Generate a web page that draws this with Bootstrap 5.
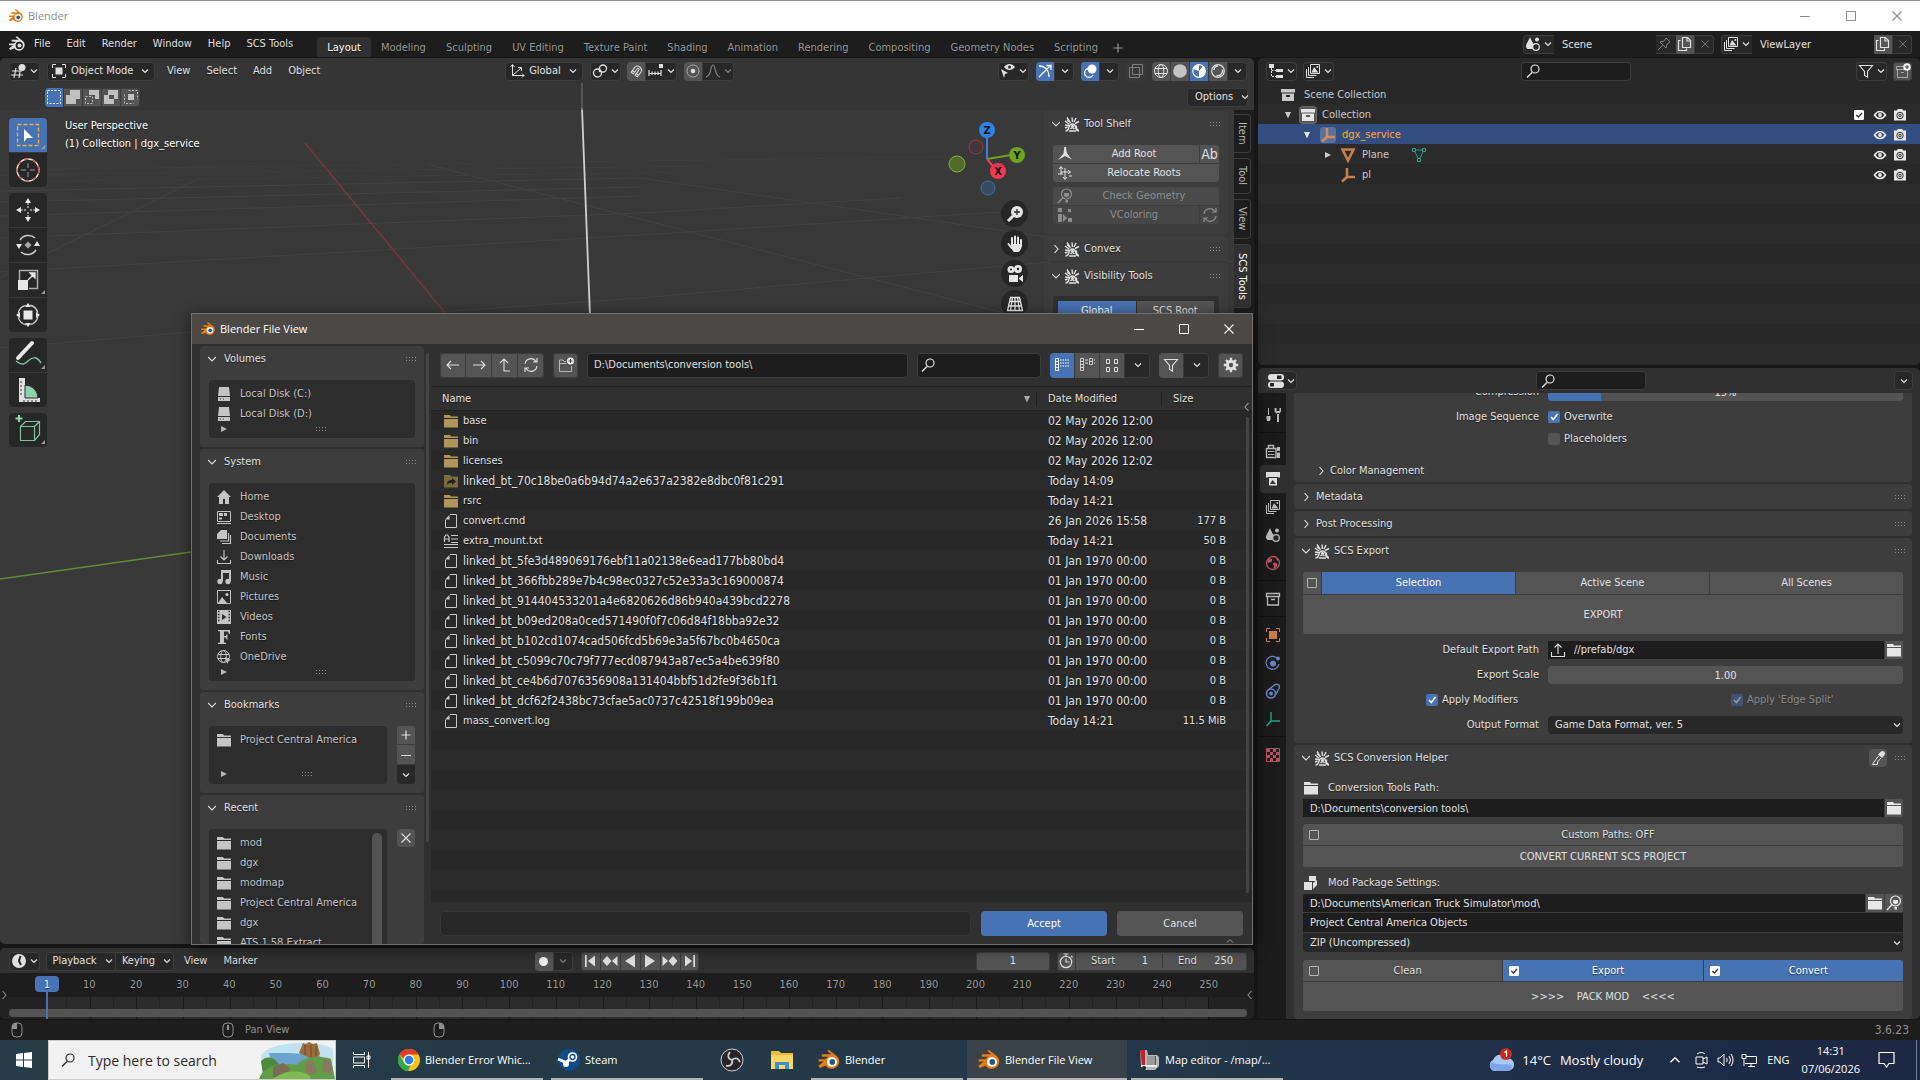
<!DOCTYPE html>
<html lang="en" data-bs-theme="dark">
<head>
<meta charset="utf-8">
<meta name="viewport" content="width=device-width, initial-scale=1">
<title>Blender</title>
<link href="https://cdn.jsdelivr.net/npm/bootstrap@5.3.0/dist/css/bootstrap.min.css" rel="stylesheet">
<style>
:root{--wgt:#545454;--blue:#4772b3;--panel:#3d3d3d;--edge:#3d3d3d;--menu:#282828;--txt:#1d1d1d}
body{height:100vh;overflow:hidden;background:#161616;color:#e0e0e0;font-family:"DejaVu Sans Condensed","DejaVu Sans",sans-serif;font-size:11px;line-height:14px;position:relative}
button,input,select{font:inherit;color:inherit;margin:0;padding:0;border:0;background:none;border-radius:0;outline:0;min-width:0}
button{display:flex;align-items:center;justify-content:center}
a{color:inherit;text-decoration:none}
svg{display:block;flex:none;overflow:visible}
.ic,.ic-s{width:16px;height:16px;fill:currentColor;stroke:none}
.ic-s{width:8px;height:8px}
.grip{width:12px;height:6px;fill:#8a8a8a}
.win-ui{font-family:"Open Sans","Noto Sans",sans-serif}
.shade{text-shadow:0 1px 1px rgba(0,0,0,.5)}
.titlebar{height:31px;background:#fff;color:#8c8c8c;border-top:1px solid #8f8f8f}
.winbtn{width:46px;height:30px}
.topbar{height:26px;background:#1d1d1d}
.menu-link{padding:0 8px}
.ws-tab{height:20px;padding:1px 10px 0;color:#989898;border-radius:4px 4px 0 0;display:flex;align-items:center}
.ws-tab.active{background:#303030;color:#fff}
.wg{height:19px;display:flex;align-items:stretch;border-radius:4px;box-shadow:inset 0 0 0 1px var(--edge);background:var(--menu);overflow:hidden;align-items:center}
.wg>button{height:19px;width:19px;border-right:1px solid #3b3b3b}
.wg>button:last-child{border-right:0}
.lit{background:var(--wgt)}
.on{background:var(--blue)!important;color:#fff}
.dim{color:#7f7f7f}
.ed{width:31px;justify-content:center;gap:3px}
.sel{display:flex;align-items:center}
.sel select{appearance:none;flex:1 1 auto;padding-right:16px;height:19px}
.sel>svg:last-child{margin-left:-14px;margin-right:6px;pointer-events:none}
.area{border-radius:5px;overflow:hidden}
.right-col{width:662px;flex:none}
.view3d{background:#393939}
.vhead{height:52px;background:rgba(48,48,48,.45)}
.tools{width:38px}
.tgroup{border-radius:4px;overflow:hidden;display:flex;flex-direction:column;gap:1px;background:#3a3a3a}
.tgroup button{width:38px;height:34px;background:#272727;position:relative}
.tgroup svg{width:24px;height:24px}
.corner::after{content:"";position:absolute;right:2px;bottom:3px;border:2px solid transparent;border-right-color:#999;border-bottom-color:#999}
.npanel{width:184px}
.npanel .stack button{height:18px}
.pnl{background:var(--panel);border-radius:4px}
.ph{height:26px;display:flex;align-items:center;padding:0 12px 0 8px;gap:4px}
.vtabs{width:20px;background:#1d1d1d}
.vtabs button{writing-mode:vertical-rl;width:17px;border:1px solid #3c3c3c;border-left:0;border-radius:0 4px 4px 0;color:#b8b8b8}
.vtabs .cur{background:#303030;color:#fff}
.stack{display:flex;flex-direction:column;gap:1px;border-radius:3px;overflow:hidden}
.stack button,.cell{background:var(--wgt);height:19px;flex:none}
.nav-dot{width:27px;height:27px;border-radius:50%;background:#262626;color:#e6e6e6}
.nav-dot svg{width:18px;height:18px}
.outl{background:#282828}
.hd{height:26px;display:flex;align-items:center}
.rows{background:repeating-linear-gradient(#282828 0 20px,#2b2b2b 20px 40px)}
.orow{height:20px;padding-top:1px!important;display:flex;align-items:center;color:#c8c8c8}
.orow.picked{background:#334d80}
.orow .lid{color:#e6e6e6}
.halo{background:#5a5a5a;border-radius:3px;box-shadow:0 0 0 1px #6a6a6a}
.ck{appearance:none;width:12px;height:12px;border-radius:2px;background:var(--wgt);flex:none;display:block}
.ck:checked{background:var(--blue) url("data:image/svg+xml,%3Csvg xmlns='http://www.w3.org/2000/svg' viewBox='0 0 12 12'%3E%3Cpath d='M3 6l2.300 2.500L9.500 3' fill='none' stroke='white' stroke-width='1.600'/%3E%3C/svg%3E")}
.ck.line{width:10px;height:10px;border:1px solid #b4b4b4;background-color:transparent;border-radius:1px}
.ck.line:checked{background:#fff url("data:image/svg+xml,%3Csvg xmlns='http://www.w3.org/2000/svg' viewBox='0 0 12 12'%3E%3Cpath d='M2 6l3 3L10.500 3' fill='none' stroke='%23333' stroke-width='2'/%3E%3C/svg%3E");border-color:#fff}
.props{background:#303030}
.ptabs{width:28px;background:#1b1b1b;padding-top:8px}
.ptabs button{width:26px;height:28px;margin-left:2px;color:#b9b9b9;border-radius:4px 0 0 4px}
.ptabs .cur{background:#303030;color:#ddd}
.ptabs hr{margin:3px 0 4px;border-color:#111;opacity:1}
.field{height:18px;background:var(--txt);padding:0 7px;border-radius:0}
.plabel{width:245px;text-align:right;padding-right:9px;flex:none}
.prow{display:flex;align-items:center;height:18px}
.fbtn{width:19px;height:18px;background:var(--wgt);border-left:1px solid #3d3d3d;flex:none;color:#e8e8e8}
.chk{display:flex;align-items:center;gap:4px}
.tog{flex:1 1 0;display:flex;align-items:center;background:var(--wgt);height:21px;padding:0 6px}
.tog span{flex:1;text-align:center}
.tline{background:#1d1d1d}
.tick{flex:1 1 0;text-align:center;color:#9a9a9a}
.tgrid .tick{background:linear-gradient(90deg,transparent 50%,#1a1a1a 50%,#1a1a1a calc(50% + 1px),transparent calc(50% + 1px)),linear-gradient(90deg,#242424 1px,#2c2c2c 1px)}
.tgrid .tick:last-child{background:linear-gradient(90deg,#242424 1px,#2c2c2c 1px,#2c2c2c 50%,#141414 50%,#141414 calc(50% + 1px),#222 calc(50% + 1px))}
.head-frame{left:35px;top:3px;width:24px;height:16px;line-height:17px;border-radius:4px;background:var(--blue);color:#fff;text-align:center;z-index:2}
.head-line{left:46px;top:18px;width:2px;height:28px;background:var(--blue)}
.tbar{left:9px;right:7px;bottom:2px;height:8px;border-radius:4px;background:#545454}
.status{height:20px;background:#1d1d1d;color:#8f8f8f}
.taskbar{height:40px;background:linear-gradient(90deg,#263c46,#22384a 60%,#1f2e47 80%,#1c2744);color:#fff;font-size:11px}
.app{width:160px;height:40px;padding:0 10px;display:flex;align-items:center;gap:4px;justify-content:flex-start;background:linear-gradient(#b0b4b6,#b0b4b6) 50% 100%/152px 2px no-repeat}
.app.active{background:linear-gradient(#b0b4b6,#b0b4b6) 50% 100%/160px 2px no-repeat,#394249}
.app svg{width:24px;height:24px}
.find{width:288px;background:#f2f2f2;color:#2a2a2a;height:40px;font-size:14px;border:1px solid #ccc}
.find input::placeholder{color:#2a2a2a;opacity:1}
.fileview{left:191px;top:313px;width:1062px;height:632px;background:#303030;border:1px solid #6f6f6f;box-shadow:0 3px 14px rgba(0,0,0,.6);z-index:5}
.fv-title{height:30px;background:#4b4845;color:#fff;padding-right:1px}
.fv-title .winbtn{width:45px}
.fv-side{width:224px;margin:2px 0 0 8px}
.fv-side .pnl{margin-bottom:2px}
.lst{background:#2d2d2d;border-radius:3px;color:#c4c4c4;padding:4px 7px 0}
.lst a{display:flex;align-items:center;height:20px;gap:8px}
.lst .foot{height:10px;display:flex;align-items:center;color:#b5b5b5;padding-left:4px;margin-right:-8px}
.big{height:25px}
.big.wg>button{height:25px;width:25px}
.fv-list{background:#282828 repeating-linear-gradient(#282828 0 20px,#2b2b2b 20px 40px) 0 24px}
.fv-list th{height:24px;background:#303030;font-weight:400;border-bottom:1px solid #222;border-top:1px solid #232323;padding:0}
.fv-list td{height:20px;padding:1px 0 0}
.fv-list .hash,.fv-list .when{font-size:12px}
</style>
<script src="https://cdn.jsdelivr.net/npm/bootstrap@5.3.0/dist/js/bootstrap.bundle.min.js"></script>
</head>
<body class="d-flex flex-column">

<svg width="0" height="0" class="position-absolute" aria-hidden="true"><defs>
<symbol id="logo" viewBox="0 0 16 16"><path d="M9.600 4.200 6.800 2l1.100-.9 6 4.900a5 5 0 1 1-8.300 5.700L2 13.300.8 12l3.800-3H1l.1-1.500h4.200l2-1.600L3.200 5.800V4.200z" fill="#e87d0d"/><circle cx="10" cy="9.300" r="3.300" fill="#fff"/><circle cx="10.200" cy="9.300" r="1.900" fill="#265787"/></symbol>
<symbol id="logo-w" viewBox="0 0 16 16"><path d="M9.600 4.200 6.800 2l1.100-.9 6 4.900a5 5 0 1 1-8.300 5.700L2 13.300.8 12l3.800-3H1l.1-1.500h4.200l2-1.600L3.200 5.800V4.200z"/><circle cx="10" cy="9.300" r="3.200" fill="#1d1d1d"/><circle cx="10.200" cy="9.300" r="1.800"/></symbol>
<symbol id="dn" viewBox="0 0 8 8"><path d="M1 2.500 4 5.500 7 2.500" fill="none" stroke="currentColor" stroke-width="1.200"/></symbol>
<symbol id="up" viewBox="0 0 8 8"><path d="M1 5.500 4 2.500 7 5.500" fill="none" stroke="currentColor" stroke-width="1"/></symbol>
<symbol id="rt" viewBox="0 0 8 8"><path d="M2.500 0 6 4 2.500 8" fill="none" stroke="currentColor" stroke-width="1.100"/></symbol>
<symbol id="lf" viewBox="0 0 8 8"><path d="M5.500 0 2 4 5.500 8" fill="none" stroke="currentColor" stroke-width="1.100"/></symbol>
<symbol id="open" viewBox="0 0 8 8"><path d="M0 2 4 6 8 2" fill="none" stroke="currentColor" stroke-width="1.100"/></symbol>
<symbol id="tri-r" viewBox="0 0 8 8"><path d="M1 1v6l6-3z"/></symbol>
<symbol id="tri-d" viewBox="0 0 8 8"><path d="M1 1h6L4 7.500z"/></symbol>
<symbol id="grip" viewBox="0 0 12 6"><path d="M0 1h1v1H0zM3 1h1v1H3zM6 1h1v1H6zM9 1h1v1H9zM0 4h1v1H0zM3 4h1v1H3zM6 4h1v1H6zM9 4h1v1H9z"/></symbol>
<symbol id="min" viewBox="0 0 10 10"><path d="M0 5h10v1H0z"/></symbol>
<symbol id="max" viewBox="0 0 10 10"><path d="M.5.5h9v9h-9z" fill="none" stroke="currentColor"/></symbol>
<symbol id="x" viewBox="0 0 10 10"><path d="M.5.5l9 9m0-9l-9 9" fill="none" stroke="currentColor" stroke-width="1.100"/></symbol>
<symbol id="scs" viewBox="0 0 16 16"><g fill="none" stroke="currentColor" stroke-width="1.400"><path d="M8.500 6 8 1.500M6.500 7 3 1.500M3 4 6 6M1 5l4 3M5 9.500 1 9M10 6l2-4M11 7.500l4-2M12.500 9.500v3l2 2M1 12l2.500-1M1.500 15c2 0 3-1.500 3.500-4 1-4 6-4 6.500 0 .3 2.500 1.500 4 3.500 4"/><path d="M5 15h7M6.500 13c1-1.500 3-1.500 4 0"/></g><circle cx="8.500" cy="10.300" r="1.500"/></symbol>
<symbol id="folder" viewBox="0 0 16 16"><path d="M1 2h6l1 1.500h7V5H1zM1 6h14v8.500H1z"/></symbol>
<symbol id="flink" viewBox="0 0 16 16"><path d="M1 2h6l1 1.500h7v11H1z" fill="#7d6a3c"/><path d="M4 12c0-4 2-5 5-5V5l4 3.500L9 12v-2c-2 0-4 0-5 2z" fill="#222"/></symbol>
<symbol id="file" viewBox="0 0 16 16"><path d="M7 1.500H13.500v13h-11V7" fill="none" stroke="currentColor"/><path d="M2 6.500 6.500 2v4.500z"/></symbol>
<symbol id="ftxt" viewBox="0 0 16 16"><path d="M8 2h7v1H8zM8 5.500h7v1H8zM8 9h7v1H8zM1 11h14v1H1zM1 14h14v1H1z"/><path d="M1.500 9V4L3 2h1.500L6 4v5M1.500 6H6" fill="none" stroke="currentColor" stroke-width="1.200"/></symbol>
<symbol id="find" viewBox="0 0 16 16"><circle cx="10" cy="6" r="4" fill="none" stroke="currentColor" stroke-width="1.200"/><path d="M7 9.500 2 14.500" stroke="currentColor" stroke-width="1.400"/></symbol>
<symbol id="grid3" viewBox="0 0 16 16"><path d="M1 8h10M0 12h12M5 5 3 15M9 8.500 8 15" fill="none" stroke="currentColor" stroke-width="1.200"/><circle cx="11" cy="4.500" r="3.500"/></symbol>
<symbol id="objm" viewBox="0 0 16 16"><path d="M4.500 4.500h7v7h-7z"/><path d="M1.500 5V1.500H5M11 1.500h3.500V5M14.500 11v3.500H11M5 14.500H1.500V11" fill="none" stroke="currentColor"/></symbol>
<symbol id="orient" viewBox="0 0 16 16"><path d="M3.500 2v10.500H15M1.500 4l2-2.500 2 2.500M13 10.500l2 2-2 2M3.500 12.500 12 5M9 4.500h3.500V8" fill="none" stroke="currentColor"/></symbol>
<symbol id="pivot" viewBox="0 0 16 16"><g fill="none" stroke="currentColor" stroke-width="1.300"><circle cx="5.500" cy="10" r="4"/><circle cx="11" cy="5.500" r="3.500"/></g><circle cx="8" cy="8" r="1.300"/></symbol>
<symbol id="magnet" viewBox="0 0 16 16"><g transform="rotate(-8 8 8)"><path d="M3 8.500 7.500 4a4 4 0 0 1 5.500 5.500L8.500 14 6.500 12 11 7.500A1 1 0 0 0 9.500 6L5 10.500zM4.500 7l2 2M10 12.500l-2-2" fill="none" stroke="currentColor"/></g></symbol>
<symbol id="snapi" viewBox="0 0 16 16"><path d="M1 7v6M4 8.500V12M7 8.500V12M10 8.500V12M13 7v6M1 10.500h12" fill="none" stroke="currentColor" stroke-width="1.200"/><path d="M11 1h4v4h-4z"/></symbol>
<symbol id="prop" viewBox="0 0 16 16"><circle cx="8" cy="8" r="6" fill="none" stroke="currentColor" stroke-opacity=".6"/><circle cx="8" cy="8" r="2.300"/></symbol>
<symbol id="curve" viewBox="0 0 16 16"><path d="M1 14C7 13 5 2 8 2s1 11 7 12" fill="none" stroke="currentColor" stroke-width="1.200"/></symbol>
<symbol id="visel" viewBox="0 0 16 16"><path d="M1 6l7 4-3 1-1 4z"/><path d="M4 4c3-4 8-4 11 0-3 4-8 4-11 0z"/><circle cx="9.500" cy="4" r="1.500" fill="#282828"/></symbol>
<symbol id="gizmo" viewBox="0 0 16 16"><path d="M2 3c6 0 10 4 10 11M2 14 13 3M9.500 2.500H14V7" fill="none" stroke="currentColor" stroke-width="1.300"/></symbol>
<symbol id="over" viewBox="0 0 16 16"><circle cx="10" cy="6" r="4.500"/><path d="M6 5.500a4.500 4.500 0 1 0 5 6.500" fill="none" stroke="currentColor" stroke-width="1.300"/></symbol>
<symbol id="xray" viewBox="0 0 16 16"><path d="M4.500 1.500h10v10h-10zM1.500 4.500h10v10h-10z" fill="none" stroke="currentColor"/></symbol>
<symbol id="wire" viewBox="0 0 16 16"><g fill="none" stroke="currentColor"><circle cx="8" cy="8" r="6.500"/><ellipse cx="8" cy="8" rx="2.800" ry="6.500"/><path d="M2 5.500h12M2 10.500h12"/></g></symbol>
<symbol id="solid" viewBox="0 0 16 16"><circle cx="8" cy="8" r="6.800" fill="#c4c4c4"/></symbol>
<symbol id="matp" viewBox="0 0 16 16"><circle cx="8" cy="8" r="6.300" fill="none" stroke="currentColor" stroke-width="1.200"/><path d="M8 8 12 3a6.500 6.500 0 0 1-4 11.300zM8 8 2.500 6A6.500 6.500 0 0 1 8 1.700z"/></symbol>
<symbol id="rend" viewBox="0 0 16 16"><circle cx="8" cy="8" r="6.300" fill="none" stroke="currentColor" stroke-width="1.200"/><path d="M4 7a4 4 0 0 1 4-4M12.500 6.500a5 5 0 0 1-6 6" fill="none" stroke="currentColor" stroke-width="1.500"/></symbol>
<symbol id="scene" viewBox="0 0 16 16"><path d="M5 1c1 3 4 7 4 9a3 3 0 0 1-1 3H2.500A3.500 3.500 0 0 1 1 10C1 8 4 4 5 1z"/><circle cx="11" cy="11" r="3.300" fill="#282828" stroke="currentColor" stroke-width="1.300"/><circle cx="12" cy="3.500" r="2"/></symbol>
<symbol id="layer" viewBox="0 0 16 16"><path d="M1.500 6v8.500H9M3.500 4v8.500h8" fill="none" stroke="currentColor"/><path d="M5.500 1.500h9v9h-9z" fill="none" stroke="currentColor"/><path d="M6.500 9.500 9 4l4.500 5.500z"/><circle cx="12.300" cy="4" r="1"/></symbol>
<symbol id="copy" viewBox="0 0 16 16"><path d="M5.500 1.500h5l3 3v7h-8z" fill="none" stroke="currentColor" stroke-width="1.200"/><path d="M3.500 4.500h-2v10h8v-2M10 1.500V5h3.500" fill="none" stroke="currentColor" stroke-width="1.200"/></symbol>
<symbol id="pin" viewBox="0 0 16 16"><path d="M10 2 14 6l-3 2-1 4-6-6 4-1zM6.500 9.500 2 14" fill="none" stroke="currentColor"/></symbol>
<symbol id="tree" viewBox="0 0 16 16"><path d="M1 1h5v4H1zM8 6h7v3H8zM8 12h7v3H8z"/><path d="M3.500 5v8.500H8M3.500 7.500H8" fill="none" stroke="currentColor" stroke-dasharray="2 1"/></symbol>
<symbol id="funnel" viewBox="0 0 16 16"><path d="M1.500 2.500h13l-5 6V14l-3-1.500v-4z" fill="none" stroke="currentColor" stroke-width="1.100"/></symbol>
<symbol id="newcol" viewBox="0 0 16 16"><path d="M9 3.500H1.500v3h11V9M2.500 6.500v8h10V9M6 9.500h3" fill="none" stroke="currentColor" stroke-opacity=".6"/><circle cx="12" cy="4" r="3.800" fill="#eee"/><path d="M12 2v4M10 4h4" stroke="#444"/></symbol>
<symbol id="coll" viewBox="0 0 16 16"><path d="M1 2h14v3.500H1zM2 6.500h12V14H2zm4 1.500v2h4V8z" fill-rule="evenodd"/></symbol>
<symbol id="coll-o" viewBox="0 0 16 16"><path d="M1.500 2.500h13v3h-13zM2.500 5.500v8.500h11V5.500M6 8.500h4" fill="none" stroke="currentColor" stroke-width="1.300"/></symbol>
<symbol id="empty" viewBox="0 0 16 16"><path d="M7 1v9h8M7 10l-5 4.500" fill="none" stroke="currentColor" stroke-width="2.600"/></symbol>
<symbol id="mesh" viewBox="0 0 16 16"><path d="M2.500 2.500h11L8 13.500z" fill="none" stroke="currentColor" stroke-width="2.600"/></symbol>
<symbol id="meshd" viewBox="0 0 16 16"><path d="M3 3h10L8 13z" fill="none" stroke="currentColor"/><path d="M1.500 1.500h3v3h-3zM11.500 1.500h3v3h-3zM6.500 11.500h3v3h-3z" fill="#2b2b2b" stroke="currentColor"/></symbol>
<symbol id="eye" viewBox="0 0 16 16"><path d="M2.500 8c3-4.700 8-4.700 11 0-3 4.700-8 4.700-11 0z" fill="none" stroke="currentColor" stroke-width="1.600"/><circle cx="8" cy="8" r="1.900"/></symbol>
<symbol id="cam" viewBox="0 0 16 16"><path d="M2 3.500h2.500L6 2h4l1.500 1.500H14v10H2z"/><circle cx="8" cy="8.500" r="3.200" fill="none" stroke="#2b2b2b"/><circle cx="8" cy="8.500" r="1.200" fill="none" stroke="#2b2b2b"/></symbol>
<symbol id="props" viewBox="0 0 16 16"><rect x="0" y="1" width="16" height="6.500" rx="3"/><rect x="0" y="8.500" width="16" height="6.500" rx="3"/><path d="M9 2.500h4.500v3.500H9zM2 10h4v3.500H2z" fill="#282828"/></symbol>
<symbol id="tool" viewBox="0 0 16 16"><path d="M3 1h1v7H3zM1.500 9h4v3c0 3-4 3-4 0zM12 6h2v9h-2zM9.500 1v3.500L12 7h2l2-2.500V1h-1.500v3h-3V1z"/></symbol>
<symbol id="rtab" viewBox="0 0 16 16"><path d="M1.500 5.500h9.500v9H1.500zM3.500 5V2.500h5V5" fill="none" stroke="currentColor" stroke-width="1.400"/><path d="M12 4h3v4h-3zM12 9.500h3v5.500h-3z"/><path d="M3 8.500h6.500M3 11.500h6.500" stroke="currentColor"/></symbol>
<symbol id="otab" viewBox="0 0 16 16"><path d="M1 1h14v5.500h-2V6H3v.5H1zM4 7h8v7.500H4z"/><path d="M5 13l2.500-4L11 13z" fill="#333"/></symbol>
<symbol id="world" viewBox="0 0 16 16"><circle cx="8" cy="8" r="6.500" fill="none" stroke="currentColor" stroke-width="1.300"/><path d="M3 4c3-2 5 0 4 2S3 8 2 7zM8 8c3-1 5 0 4 3s-4 3-3 1-2-2-1-4zM11 2l3 3-2 1z"/></symbol>
<symbol id="objt" viewBox="0 0 16 16"><path d="M4 4h8v8H4z"/><path d="M1.500 5V1.500H5M11 1.500h3.500V5M14.500 11v3.500H11M5 14.500H1.500V11" fill="none" stroke="currentColor"/></symbol>
<symbol id="phys" viewBox="0 0 16 16"><path d="M12 3A6.500 6.500 0 1 0 14 9" fill="none" stroke="currentColor" stroke-width="1.200"/><circle cx="8" cy="8.500" r="3"/><circle cx="13" cy="3.500" r="2"/></symbol>
<symbol id="cons" viewBox="0 0 16 16"><path d="M2 8 10 1.500c4-1 5 1 4 4L10.500 12" fill="none" stroke="currentColor" stroke-width="1.400"/><circle cx="6" cy="10.500" r="4.500" fill="none" stroke="currentColor" stroke-width="1.500"/><circle cx="6" cy="10.500" r="2"/></symbol>
<symbol id="axis" viewBox="0 0 16 16"><path d="M6 1v9h9M6 10l-4.500 5" fill="none" stroke="currentColor" stroke-width="1.400"/></symbol>
<symbol id="chk" viewBox="0 0 16 16"><path d="M1.500 1.500h13v13h-13z" fill="none" stroke="currentColor"/><path d="M2 2h3v3H2zM8 2h3v3H8zM5 5h3v3H5zM11 5h3v3h-3zM2 8h3v3H2zM8 8h3v3H8zM5 11h3v3H5zM11 11h3v3h-3z"/></symbol>
<symbol id="upl" viewBox="0 0 16 16"><path d="M8 12V2M4.500 5.500 8 2l3.500 3.500M1.500 10v4.500h13V10" fill="none" stroke="currentColor" stroke-width="1.100"/></symbol>
<symbol id="dnl" viewBox="0 0 16 16"><path d="M8 1v10M4.500 7.500 8 11l3.500-3.500M1.500 11v3.500h13V11" fill="none" stroke="currentColor" stroke-width="1.100"/></symbol>
<symbol id="drop" viewBox="0 0 16 16"><path d="M11 1.500a2.500 2.500 0 0 1 3.500 3.500L12 8 8 4.500z"/><path d="M8.500 6 4 12l-1.500 2.500h5V12L11 8" fill="none" stroke="currentColor"/></symbol>
<symbol id="pack" viewBox="0 0 16 16"><path d="M6 1h7v5H6zM1 7h8v8H1zM10 8l4-3v5l-4 4z"/></symbol>
<symbol id="mag" viewBox="0 0 16 16"><circle cx="9.500" cy="6" r="5" fill="none" stroke="currentColor" stroke-width="1.200"/><path d="M6 9.500 1 15" stroke="currentColor" stroke-width="1.500"/><path d="M7 5h5v3L9.500 9.500 7 8zM8.500 12h2.500v2.500H8.500z"/></symbol>
<symbol id="root" viewBox="0 0 16 16"><path d="M7.300 1h1.600l1 6 5 6.500L8 10l-7 4 5.500-6.500z"/></symbol>
<symbol id="reloc" viewBox="0 0 16 16"><path d="M4 9V2M2 4l2-2.500L6 4M4 7h9M11 5l2.500 2L11 9M8 3v11M6 12l2 2.500 2-2.500M1 9h5M12 11h3" fill="none" stroke="currentColor"/></symbol>
<symbol id="vcol" viewBox="0 0 16 16"><path d="M1 1h4v4H1zM1 7h4v8H1zM6 7l4 4-4 4zM11 2h3v3h-3zM11 11h4v4h-4z"/></symbol>
<symbol id="refr" viewBox="0 0 16 16"><path d="M2 7a6 6 0 0 1 11-2.500M14 1v4h-4M14 9a6 6 0 0 1-11 2.500M2 15v-4h4" fill="none" stroke="currentColor" stroke-width="1.200"/></symbol>
<symbol id="disk" viewBox="0 0 16 16"><path d="M3 1h10l1 9H2zM2 11h12v4H2z"/><path d="M4 12.500h1v1H4zM7 12.500h1v1H7z" fill="#333"/></symbol>
<symbol id="home" viewBox="0 0 16 16"><path d="M8 1 1 8h2v7h4v-5h2v5h4V8h2z"/></symbol>
<symbol id="desk" viewBox="0 0 16 16"><path d="M1.500 2.500h13v10h-13zM1 14.500h14" fill="none" stroke="currentColor"/><path d="M3 4h4v3H3zM8 4h3v3H8zM3 8.500h3v2H3z"/></symbol>
<symbol id="docs" viewBox="0 0 16 16"><path d="M5 1h6v9H1V5z"/><path d="M12.500 4v8H4M14.500 6v8.500H6" fill="none" stroke="currentColor" stroke-width="1.200"/></symbol>
<symbol id="music" viewBox="0 0 16 16"><path d="M5 1h10v11h-2V4H7v8H5z"/><circle cx="4" cy="12.500" r="2.700"/><circle cx="12" cy="12.500" r="2.700"/></symbol>
<symbol id="pict" viewBox="0 0 16 16"><path d="M1.500 1.500h13v13h-13z" fill="none" stroke="currentColor"/><path d="M2 14l4-6 5 6z"/><circle cx="11" cy="5.500" r="1.600"/></symbol>
<symbol id="video" viewBox="0 0 16 16"><path d="M1 1h14v14H1z"/><path d="M2 2.500h1.500M2 5.500h1.500M2 8.500h1.500M2 11.500h1.500M12.500 2.500H14M12.500 5.500H14M12.500 8.500H14M12.500 11.500H14" stroke="#2d2d2d" stroke-width="1.500"/><path d="M6 5v6l4.500-3z" fill="#2d2d2d"/></symbol>
<symbol id="fontf" viewBox="0 0 16 16"><path d="M2 1h12v4h-1l-1-2.500H8V7h2l.5-1.500h1v5h-1L10 8.500H8v5l2 .5v1H2v-1l2-.5v-11L2 2z"/></symbol>
<symbol id="globe" viewBox="0 0 16 16"><g fill="none" stroke="currentColor"><circle cx="7.500" cy="7.500" r="6"/><ellipse cx="7.500" cy="7.500" rx="2.800" ry="6"/><path d="M2 5.500h11M2 9.500h11"/></g><path d="M9 8l6 3-2.500 1-1 3z"/></symbol>
<symbol id="a-l" viewBox="0 0 16 16"><path d="M14 8H2M6 4 2 8l4 4" fill="none" stroke="currentColor" stroke-width="1.100"/></symbol>
<symbol id="a-r" viewBox="0 0 16 16"><path d="M2 8h12M10 4l4 4-4 4" fill="none" stroke="currentColor" stroke-width="1.100"/></symbol>
<symbol id="a-u" viewBox="0 0 16 16"><path d="M7 2v12h6M3 6l4-4 4 4" fill="none" stroke="currentColor" stroke-width="1.100"/></symbol>
<symbol id="newf" viewBox="0 0 16 16"><path d="M8 4.500H6L5 3H1.500v11.500h12V9M1.500 6.500h7" fill="none" stroke="currentColor" stroke-opacity=".7"/><circle cx="12.500" cy="4" r="3.500" fill="#eee"/><path d="M12.500 2v4M10.500 4h4" stroke="#444"/></symbol>
<symbol id="v1" viewBox="0 0 16 16"><path d="M1.500 1.500h3v3h-3zM1.500 4.500h3v3h-3zM1.500 7.500h3v3h-3zM1.500 10.500h3v3h-3z" fill="none" stroke="currentColor"/><path d="M6 3h10M6 6h10M6 9h10" stroke="currentColor" stroke-dasharray="1.500 1"/></symbol>
<symbol id="v2" viewBox="0 0 16 16"><path d="M1.500 1.500h3v3h-3zM1.500 4.500h3v3h-3zM1.500 7.500h3v3h-3zM1.500 10.500h3v3h-3zM10.500 1.500h3v3h-3zM10.500 4.500h3v3h-3z" fill="none" stroke="currentColor" stroke-opacity=".8"/><path d="M6 3h3M6 6h3M15 3h1M15 6h1" stroke="currentColor"/></symbol>
<symbol id="v3" viewBox="0 0 16 16"><path d="M2.500 2.500h3v4h-3zM10.500 2.500h3v4h-3zM2.500 10.500h3v4h-3zM10.500 10.500h3v4h-3z" fill="none" stroke="currentColor"/></symbol>
<symbol id="gear" viewBox="0 0 16 16"><circle cx="8" cy="8" r="3.700" fill="none" stroke="currentColor" stroke-width="3.200"/><path d="M8 .8v14.400M.8 8h14.400M3 3l10 10M13 3 3 13" stroke="currentColor" stroke-width="2.400"/><circle cx="8" cy="8" r="2.200" fill="#545454"/></symbol>
<symbol id="plus" viewBox="0 0 10 10"><path d="M5 .5v9M.5 5h9" stroke="currentColor" stroke-width="1.200"/></symbol>
<symbol id="clock" viewBox="0 0 16 16"><circle cx="8" cy="8" r="7"/><path d="M9.500 3 8 8l2 4" fill="none" stroke="#282828" stroke-width="2"/></symbol>
<symbol id="watch" viewBox="0 0 16 16"><circle cx="8" cy="9" r="5.700" fill="none" stroke="currentColor" stroke-width="1.200"/><path d="M5.500 1h5M8 1v2M8 5.500V9h3.500M13 3l1.500 1.500" fill="none" stroke="currentColor" stroke-width="1.200"/></symbol>
<symbol id="p1" viewBox="0 0 16 16"><path d="M3 2h1.700v12H3zM13 2.500v11L6 8z"/></symbol>
<symbol id="p2" viewBox="0 0 16 16"><path d="M5 3l4.500 5L5 13 .5 8zM15.500 3v10L10 8z"/></symbol>
<symbol id="p3" viewBox="0 0 16 16"><path d="M13 1.500v13L3 8z"/></symbol>
<symbol id="mouse-l" viewBox="0 0 12 16"><rect x="1" y="1" width="10" height="14" rx="4" fill="none" stroke="currentColor"/><path d="M1 7V4l3-3h2v6z"/></symbol>
<symbol id="mouse-m" viewBox="0 0 12 16"><rect x="1" y="1" width="10" height="14" rx="4" fill="none" stroke="currentColor"/><path d="M5 3h2v5H5z"/></symbol>
<symbol id="mouse-r" viewBox="0 0 12 16"><rect x="1" y="1" width="10" height="14" rx="4" fill="none" stroke="currentColor"/><path d="M11 7V4L8 1H6v6z"/></symbol>
</defs></svg>

<header class="titlebar win-ui d-flex align-items-center flex-shrink-0">
  <svg class="ic ms-2 me-1"><use href="#logo"/></svg><span>Blender</span>
  <button class="winbtn ms-auto" aria-label="Minimize"><svg width="10" height="10" fill="#8c8c8c"><use href="#min"/></svg></button>
  <button class="winbtn" aria-label="Maximize"><svg width="10" height="10"><use href="#max"/></svg></button>
  <button class="winbtn" aria-label="Close"><svg width="10" height="10"><use href="#x"/></svg></button>
</header>

<nav class="topbar shade d-flex flex-shrink-0">
  <div class="d-flex align-items-center ps-2">
    <svg class="ic" style="width:18px;height:18px"><use href="#logo-w"/></svg>
    <a class="menu-link" href="#">File</a><a class="menu-link" href="#">Edit</a><a class="menu-link" href="#">Render</a><a class="menu-link" href="#">Window</a><a class="menu-link" href="#">Help</a><a class="menu-link" href="#">SCS Tools</a>
  </div>
  <div class="d-flex align-items-end ms-3">
    <a class="ws-tab active" href="#">Layout</a><a class="ws-tab" href="#">Modeling</a><a class="ws-tab" href="#">Sculpting</a><a class="ws-tab" href="#">UV Editing</a><a class="ws-tab" href="#">Texture Paint</a><a class="ws-tab" href="#">Shading</a><a class="ws-tab" href="#">Animation</a><a class="ws-tab" href="#">Rendering</a><a class="ws-tab" href="#">Compositing</a><a class="ws-tab" href="#">Geometry Nodes</a><a class="ws-tab" href="#">Scripting</a>
    <button class="ws-tab" style="padding:1px 5px 0" aria-label="Add workspace"><svg width="10" height="10"><use href="#plus"/></svg></button>
  </div>
  <div class="d-flex align-items-center ms-auto pe-2" style="gap:7px">
    <div class="wg" style="width:191px"><div class="ed d-flex align-items-center"><svg class="ic"><use href="#scene"/></svg><svg class="ic-s"><use href="#dn"/></svg></div>
      <input class="flex-fill h-100 ps-2" style="background:#1d1d1d;width:90px" value="Scene" aria-label="Scene"><svg class="ic dim me-1"><use href="#pin"/></svg>
      <button class="lit" aria-label="New scene"><svg class="ic"><use href="#copy"/></svg></button><button class="dim" aria-label="Remove scene"><svg width="8" height="8"><use href="#x"/></svg></button></div>
    <div class="wg" style="width:191px"><div class="ed d-flex align-items-center"><svg class="ic"><use href="#layer"/></svg><svg class="ic-s"><use href="#dn"/></svg></div>
      <input class="flex-fill h-100 ps-2" style="background:#1d1d1d;width:90px" value="ViewLayer" aria-label="View layer">
      <button class="lit" aria-label="New layer"><svg class="ic"><use href="#copy"/></svg></button><button class="dim" aria-label="Remove layer"><svg width="8" height="8"><use href="#x"/></svg></button></div>
  </div>
</nav>

<main class="d-flex flex-fill overflow-hidden" style="gap:4px;padding:1px 0 1px">
  <div class="d-flex flex-column flex-fill overflow-hidden" style="gap:4px">
    <section class="area view3d flex-fill position-relative d-flex flex-column">
      <svg class="position-absolute top-0 start-0" width="1254" height="886" viewBox="0 58 1254 886">
        <g stroke="#444" stroke-width="1" fill="none">
          <path d="M0 348 191 332M0 272 640 235 1000 212M0 238 640 213 900 198M0 216 640 196M0 202 640 187M0 191 640 178M50 252 200 178M0 278 50 252M430 165 640 219 1000 312M640 178 1040 236 1235 262M640 298 1050 262M440 312 640 298"/>
          <path d="M0 182 700 172M0 175 700 166M0 170 1000 156" stroke="#3e3e3e"/>
        </g>
        <path d="M305 143 446 314" stroke="#7b3540" stroke-width="1.300"/>
        <path d="M582 83v25" stroke="#888" stroke-width="1.500"/><path d="M582 108 590 316" stroke="#d0d0d0" stroke-width="1.800"/>
        <path d="M0 579 191 552" stroke="#668a33" stroke-width="1.500"/>
      </svg>
      <div class="vhead position-relative shade">
        <div class="d-flex align-items-center" style="height:26px;padding:0 7px 0 9px">
          <div class="wg ed"><svg class="ic"><use href="#grid3"/></svg><svg class="ic-s"><use href="#dn"/></svg></div>
          <div class="wg sel" style="width:108px;margin-left:7px"><svg class="ic ms-1 me-1"><use href="#objm"/></svg><select aria-label="Mode"><option>Object Mode</option></select><svg class="ic-s"><use href="#dn"/></svg></div>
          <div class="d-flex ms-2 gap-3"><a href="#" class="ms-1">View</a><a href="#">Select</a><a href="#">Add</a><a href="#">Object</a></div>
          <div style="flex:7"></div>
          <div class="wg sel" style="width:78px"><svg class="ic ms-1 me-1"><use href="#orient"/></svg><select aria-label="Orientation"><option>Global</option></select><svg class="ic-s"><use href="#dn"/></svg></div>
          <div class="wg ed" style="margin-left:7px"><svg class="ic"><use href="#pivot"/></svg><svg class="ic-s"><use href="#dn"/></svg></div>
          <div class="wg" style="margin-left:6px"><button class="lit" aria-label="Snap"><svg class="ic"><use href="#magnet"/></svg></button><div class="ed d-flex"><svg class="ic"><use href="#snapi"/></svg><svg class="ic-s mt-1"><use href="#dn"/></svg></div></div>
          <div class="wg" style="margin-left:7px"><button class="lit" aria-label="Proportional"><svg class="ic"><use href="#prop"/></svg></button><div class="ed d-flex dim"><svg class="ic"><use href="#curve"/></svg><svg class="ic-s mt-1"><use href="#dn"/></svg></div></div>
          <div style="flex:10"></div>
          <div class="d-flex" style="gap:7px">
            <div class="wg ed"><svg class="ic"><use href="#visel"/></svg><svg class="ic-s"><use href="#dn"/></svg></div>
            <div class="wg"><button class="on" aria-label="Gizmos"><svg class="ic"><use href="#gizmo"/></svg></button><button aria-label="Gizmo options"><svg class="ic-s"><use href="#dn"/></svg></button></div>
            <div class="wg"><button class="on" aria-label="Overlays"><svg class="ic"><use href="#over"/></svg></button><button aria-label="Overlay options"><svg class="ic-s"><use href="#dn"/></svg></button></div>
            <div class="wg"><button class="dim" style="background:#383838" aria-label="X-ray"><svg class="ic"><use href="#xray"/></svg></button></div>
            <div class="wg"><button class="lit" aria-label="Wireframe"><svg class="ic"><use href="#wire"/></svg></button><button class="lit" aria-label="Solid"><svg class="ic"><use href="#solid"/></svg></button><button class="on" aria-label="Material"><svg class="ic"><use href="#matp"/></svg></button><button class="lit" aria-label="Rendered"><svg class="ic"><use href="#rend"/></svg></button><button aria-label="Shading options"><svg class="ic-s"><use href="#dn"/></svg></button></div>
          </div>
        </div>
        <div class="d-flex align-items-center justify-content-between" style="height:26px;padding:0 6px 0 45px">
          <div class="wg" style="background:#545454">
            <button class="on" aria-label="Set"><svg class="ic"><path d="M1.500 1.500h13v13h-13z" fill="none" stroke="#fff" stroke-dasharray="2 1.500"/></svg></button>
            <button aria-label="Extend"><svg class="ic" style="color:#c0c0c0"><path d="M5 1h10v9h-4v5H1V6h4z"/></svg></button>
            <button aria-label="Subtract"><svg class="ic" style="color:#c0c0c0"><path d="M5 1h10v9h-4V6H5z"/><path d="M1.500 7.500h7v7h-7z" fill="none" stroke="#bbb" stroke-dasharray="2 1.500"/></svg></button>
            <button aria-label="Invert"><svg class="ic" style="color:#c0c0c0"><path fill-rule="evenodd" d="M5 1h10v9h-4v5H1V6h4zM6 6v4h5V6z"/></svg></button>
            <button aria-label="Intersect"><svg class="ic" style="color:#c0c0c0"><path d="M5 5h6v6H5z"/><path d="M5.500 1.500h9v9M1.500 5.500v9h9" fill="none" stroke="#bbb" stroke-dasharray="2 1.500"/></svg></button>
          </div>
          <button class="wg px-2 gap-2 justify-content-between" style="width:61px">Options <svg class="ic-s" style="margin-right:-4px"><use href="#dn"/></svg></button>
        </div>
      </div>

      <div class="d-flex flex-fill position-relative overflow-hidden">
        <div class="tools d-flex flex-column" style="margin:8px 0 0 9px;gap:6px">
          <div class="tgroup">
            <button class="on corner" aria-label="Select box"><svg viewBox="0 0 24 24"><path d="M1.500 1.500h21v21h-21z" fill="none" stroke="#e8b04a" stroke-width="1.300" stroke-dasharray="4 2"/><path d="M8 6v13l3-4 6 0z" fill="#fff"/></svg></button>
            <button aria-label="Cursor"><svg viewBox="0 0 24 24"><circle cx="12" cy="12" r="11" fill="none" stroke="#e8e8e8" stroke-width="1.300"/><circle cx="12" cy="12" r="11" fill="none" stroke="#c94f55" stroke-width="1.500" stroke-dasharray="4 4"/><path d="M12 5v5M12 14v5M5 12h5M14 12h5" stroke="#999"/></svg></button>
          </div>
          <div class="tgroup">
            <button aria-label="Move"><svg viewBox="0 0 24 24" fill="#e8e8e8"><path d="M12 0l3 5H9zM12 24l3-5H9zM0 12l5-3v6zM24 12l-5-3v6z"/><path d="M12 5v5M12 14v5M5 12h5M14 12h5" stroke="#e8e8e8" stroke-dasharray="2 1"/></svg></button>
            <button aria-label="Rotate"><svg viewBox="0 0 24 24" fill="#e8e8e8"><path d="M4 7a10 10 0 0 1 15-2M20 17a10 10 0 0 1-15 2" fill="none" stroke="#ccc" stroke-width="1.500"/><path d="M12 8.500 15.500 12 12 15.500 8.500 12z" fill="#aaa"/><path d="M0 11h6l-3 5zM18 13h6l-3-5z"/></svg></button>
            <button class="corner" aria-label="Scale"><svg viewBox="0 0 24 24" fill="#e8e8e8"><path d="M3.500 12V2.500h18v18H13" fill="none" stroke="#aaa" stroke-width="1.500"/><path d="M2 12h10v10H2z"/><path d="M12 12l5-5M14 5h5v5z" stroke="#e8e8e8" stroke-width="1.300"/></svg></button>
            <button aria-label="Transform"><svg viewBox="0 0 24 24" fill="#e8e8e8"><circle cx="12" cy="12" r="10" fill="none" stroke="#ccc" stroke-width="1.300" stroke-dasharray="11 4.700" stroke-dashoffset="-2"/><path d="M7.500 7.500h9v9h-9zM12 0l3 4H9zM12 24l3-4H9zM0 12l4-3v6zM24 12l-4-3v6z"/></svg></button>
          </div>
          <div class="tgroup">
            <button class="corner" aria-label="Annotate"><svg viewBox="0 0 24 24"><path d="M2 15 16 0" stroke="#e8e8e8" stroke-width="4" stroke-linecap="round"/><path d="M0 18c6 5 9 3 12 0s8-6 13 2" fill="none" stroke="#7fc0a0" stroke-width="1.500"/></svg></button>
            <button aria-label="Measure"><svg viewBox="0 0 24 24"><path d="M4 0h5v20h15v4H3V0z" fill="#e0e0e0"/><path d="M9 20V7a13 13 0 0 1 13 13z" fill="#8fd3ae" stroke="#2d2d2d"/><path d="M4 4h2M4 8h2M4 12h2M4 16h2M8 24v-2M12 24v-2M16 24v-2M20 24v-2" stroke="#333"/></svg></button>
          </div>
          <div class="tgroup"><button class="corner" aria-label="Add cube"><svg viewBox="0 0 24 24"><path d="M4.500 8.500h14v14h-14zM4.500 8.500l5-5h14v13l-5 6M18.500 8.500l5-5" fill="none" stroke="#7fc0a0" stroke-width="1.200"/><path d="M3-3v7M-.5.5h7" stroke="#8fd3ae" stroke-width="2"/></svg></button></div>
        </div>
        <div class="text-white shade" style="margin:7px 0 0 18px;line-height:18px">User Perspective<br>(1) Collection | dgx_service</div>
        <div class="ms-auto d-flex">
          <div class="d-flex flex-column align-items-end" style="margin-right:16px;gap:3px">
            <svg width="80" height="90" viewBox="946 110 80 90" font-size="11" font-weight="700" text-anchor="middle">
              <path d="M985 159v-24" stroke="#2f83e3" stroke-width="2"/><path d="M985 159l30-5" stroke="#6ca31f" stroke-width="2"/><path d="M985 159l10 12" stroke="#f63652" stroke-width="2"/>
              <circle cx="974" cy="147" r="7" fill="#40363a" stroke="#953b48"/><circle cx="955" cy="164" r="8" fill="#526b2b" stroke="#7eb02a"/><circle cx="986" cy="188" r="7" fill="#394a60" stroke="#3473b8"/>
              <circle cx="985" cy="130" r="8" fill="#2f83e3"/><circle cx="1015" cy="155" r="8" fill="#6ca31f"/><circle cx="996" cy="171" r="8" fill="#f63652"/>
              <g fill="#111"><text x="985" y="134">Z</text><text x="1015" y="159">Y</text><text x="996" y="175">X</text></g>
            </svg>
            <button class="nav-dot" style="margin-top:-3px" aria-label="Zoom"><svg viewBox="0 0 18 18"><circle cx="11" cy="7" r="6" fill="currentColor"/><path d="M7 11 2 16" stroke="currentColor" stroke-width="3"/><path d="M11 4v6M8 7h6" stroke="#262626" stroke-width="1.300"/></svg></button>
            <button class="nav-dot" aria-label="Pan"><svg viewBox="0 0 18 18"><path d="M6 10V3M9 9V1.500M12 9.500V2.500M15 11V5M2.500 9l3 4" stroke="currentColor" stroke-width="2" stroke-linecap="round"/><path d="M5 9h11c0 4-2 8-4 8H8c-1 0-3-4-3-8z" fill="currentColor"/></svg></button>
            <button class="nav-dot" aria-label="Camera"><svg viewBox="0 0 18 18" fill="currentColor"><circle cx="5" cy="4.500" r="3.500"/><circle cx="12" cy="4" r="4"/><path d="M3 10h9v7H3zM13 13l4-3v7l-4-3z"/><circle cx="5" cy="4.500" r="1" fill="#262626"/><circle cx="12" cy="4" r="1.200" fill="#262626"/></svg></button>
            <button class="nav-dot" aria-label="Perspective"><svg viewBox="0 0 18 18"><path d="M4.500 2.500h9l3 13h-15zM3.500 6.500h11M2.500 11h13M9 2.500v13M6.500 2.500l-2 13M11.500 2.500l2 13" fill="none" stroke="currentColor" stroke-width="1.300"/></svg></button>
          </div>
          <div class="npanel d-flex flex-column shade" style="gap:2px;padding-top:1px;margin-right:6px">
            <div class="pnl" style="padding-bottom:10px"><div class="ph"><svg class="ic-s"><use href="#open"/></svg><svg class="ic"><use href="#scs"/></svg>Tool Shelf<svg class="grip ms-auto" style="margin-right:-6px"><use href="#grip"/></svg></div>
              <div class="d-flex flex-column" style="padding:8px 9px 0;gap:5px">
                <div class="stack"><div class="d-flex" style="gap:1px"><button class="flex-fill px-1"><svg class="ic"><use href="#root"/></svg><span class="flex-fill">Add Root</span></button><button style="width:19px;font-size:14px" aria-label="Rename">Ab</button></div><button class="px-1"><svg class="ic"><use href="#reloc"/></svg><span class="flex-fill">Relocate Roots</span></button></div>
                <div class="stack" style="color:#8d8d8d"><button class="px-1" style="background:#4a4a4a"><svg class="ic"><use href="#mag"/></svg><span class="flex-fill">Check Geometry</span></button><div class="d-flex" style="gap:1px"><button class="flex-fill px-1" style="background:#464646"><svg class="ic"><use href="#vcol"/></svg><span class="flex-fill">VColoring</span></button><button style="width:19px;background:#464646" aria-label="Refresh"><svg class="ic"><use href="#refr"/></svg></button></div></div>
              </div></div>
            <div class="pnl"><div class="ph" style="height:25px"><svg class="ic-s"><use href="#rt"/></svg><svg class="ic"><use href="#scs"/></svg>Convex<svg class="grip ms-auto" style="margin-right:-6px"><use href="#grip"/></svg></div></div>
            <div class="pnl flex-fill"><div class="ph"><svg class="ic-s"><use href="#open"/></svg><svg class="ic"><use href="#scs"/></svg>Visibility Tools<svg class="grip ms-auto" style="margin-right:-6px"><use href="#grip"/></svg></div>
              <div style="margin:7px 9px;background:#303030;padding:5px;border-radius:3px"><div class="d-flex" style="gap:1px"><button class="cell on" style="flex:1">Global</button><button class="cell" style="flex:1">SCS Root</button></div></div></div>
          </div>
          <div class="vtabs d-flex flex-column" style="gap:5px;padding-top:4px"><button style="height:39px">Item</button><button style="height:36px">Tool</button><button style="height:40px">View</button><button class="cur" style="height:64px">SCS Tools</button></div>
        </div>
      </div>
    </section>

    <section class="area tline flex-shrink-0 shade" style="height:71px">
      <div class="hd" style="height:25px;background:#303030;padding:1px 7px 0 9px">
        <div class="wg ed"><svg class="ic"><use href="#clock"/></svg><svg class="ic-s"><use href="#dn"/></svg></div>
        <div class="wg" style="margin-left:6px"><button class="px-2 gap-2" style="width:70px">Playback<svg class="ic-s" style="margin-right:-4px"><use href="#dn"/></svg></button><button class="gap-2" style="width:58px">Keying<svg class="ic-s" style="margin-right:-3px"><use href="#dn"/></svg></button></div>
        <a href="#" style="margin-left:10px">View</a><a href="#" class="ms-3">Marker</a>
        <div style="flex:1"></div>
        <div class="wg"><button class="lit" aria-label="Auto keying"><svg width="9" height="9" fill="#eee"><circle cx="4.500" cy="4.500" r="4.500"/></svg></button><button class="dim" aria-label="Keying options"><svg class="ic-s"><use href="#dn"/></svg></button></div>
        <div class="wg lit" style="margin-left:8px"><button style="width:20px" aria-label="First"><svg class="ic"><use href="#p1"/></svg></button><button style="width:20px" aria-label="Previous key"><svg class="ic"><use href="#p2"/></svg></button><button style="width:20px" aria-label="Reverse"><svg class="ic"><use href="#p3"/></svg></button><button style="width:20px" aria-label="Play"><svg class="ic" transform="scale(-1 1)"><use href="#p3"/></svg></button><button style="width:20px" aria-label="Next key"><svg class="ic" transform="scale(-1 1)"><use href="#p2"/></svg></button><button style="width:18px" aria-label="Last"><svg class="ic" transform="scale(-1 1)"><use href="#p1"/></svg></button></div>
        <div style="flex:1"></div>
        <div class="wg lit" style="width:74px"><input class="w-100 text-center" value="1" aria-label="Current frame"></div>
        <div class="wg lit" style="margin-left:7px;width:190px"><button aria-label="Preview range"><svg class="ic"><use href="#watch"/></svg></button>
          <label class="d-flex" style="width:87px;padding:0 14px 0 15px;border-right:1px solid #3b3b3b">Start<input class="text-end flex-fill" style="width:20px" value="1"></label><label class="d-flex" style="width:84px;padding:0 14px 0 15px">End<input class="text-end flex-fill" style="width:20px" value="250"></label></div>
      </div>
      <div class="position-relative">
        <div class="d-flex align-items-center" id="ruler" style="height:24px;padding:0 22px 0 66px"></div>
        <div class="d-flex tgrid" id="tgrid" style="height:22px;padding-right:22px;background:linear-gradient(90deg,#222 46px,#2c2c2c 46px 66px,#222 66px)"><div style="width:66px"></div></div>
        <div class="position-absolute tbar"></div><div class="position-absolute head-line"></div><div class="position-absolute head-frame">1</div>
        <svg class="ic-s position-absolute start-0" style="top:18px;color:#888"><use href="#rt"/></svg>
        <svg class="ic-s position-absolute end-0" style="top:18px;color:#888"><use href="#lf"/></svg>
      </div>
    </section>
  </div>

  <div class="right-col d-flex flex-column" style="gap:3px">
    <section class="area outl d-flex flex-column" style="height:307px">
      <div class="hd" style="padding:0 8px">
        <div class="wg ed"><svg class="ic"><use href="#tree"/></svg><svg class="ic-s"><use href="#dn"/></svg></div>
        <div class="wg ed" style="margin-left:6px"><svg class="ic"><use href="#layer"/></svg><svg class="ic-s"><use href="#dn"/></svg></div>
        <div style="flex:10"></div>
        <label class="wg" style="width:110px;background:#1d1d1d"><svg class="ic ms-1"><use href="#find"/></svg><input class="w-100" aria-label="Search outliner"></label>
        <div style="flex:12"></div>
        <div class="wg ed"><svg class="ic"><use href="#funnel"/></svg><svg class="ic-s"><use href="#dn"/></svg></div>
        <div class="wg lit" style="margin-left:6px"><button aria-label="New collection"><svg class="ic"><use href="#newcol"/></svg></button></div>
      </div>
      <div class="rows flex-fill">
        <div class="orow" style="padding-left:22px"><svg class="ic me-1"><use href="#coll"/></svg><span class="ms-1">Scene Collection</span></div>
        <div class="orow" style="padding:0 12px 0 26px"><svg class="ic-s"><use href="#tri-d"/></svg><svg class="ic halo lid" style="margin:0 6px 0 8px"><use href="#coll"/></svg>Collection<span class="ms-auto d-flex align-items-center gap-1 lid"><input type="checkbox" class="ck line me-1" checked aria-label="Include"><svg class="ic"><use href="#eye"/></svg><svg class="ic"><use href="#cam"/></svg></span></div>
        <div class="orow picked" style="padding:0 12px 0 45px;color:#ffa72e"><svg class="ic-s lid"><use href="#tri-d"/></svg><svg class="ic" style="margin:0 6px 0 9px;color:#d08b61;background:#5c6f99;border-radius:3px"><use href="#empty"/></svg>dgx_service<span class="ms-auto d-flex gap-1 lid"><svg class="ic"><use href="#eye"/></svg><svg class="ic"><use href="#cam"/></svg></span></div>
        <div class="orow" style="padding:0 12px 0 66px"><svg class="ic-s"><use href="#tri-r"/></svg><svg class="ic" style="margin:0 6px 0 8px;color:#c77e4a"><use href="#mesh"/></svg>Plane<svg class="ic" style="margin-left:22px;color:#1fa883"><use href="#meshd"/></svg><span class="ms-auto d-flex gap-1 lid"><svg class="ic"><use href="#eye"/></svg><svg class="ic"><use href="#cam"/></svg></span></div>
        <div class="orow" style="padding:0 12px 0 82px"><svg class="ic" style="margin-right:6px;color:#c77e4a"><use href="#empty"/></svg>pl<span class="ms-auto d-flex gap-1 lid"><svg class="ic"><use href="#eye"/></svg><svg class="ic"><use href="#cam"/></svg></span></div>
      </div>
    </section>

    <section class="area props flex-fill d-flex flex-column overflow-hidden shade">
      <div class="hd flex-shrink-0" style="height:25px;padding:0 7px 0 8px">
        <div class="wg ed"><svg class="ic"><use href="#props"/></svg><svg class="ic-s"><use href="#dn"/></svg></div>
        <div style="flex:24"></div>
        <label class="wg" style="width:110px;background:#1d1d1d"><svg class="ic ms-1"><use href="#find"/></svg><input class="w-100" aria-label="Search properties"></label>
        <div style="flex:25"></div>
        <div class="wg"><button aria-label="Options"><svg class="ic-s"><use href="#dn"/></svg></button></div>
      </div>
      <div class="d-flex flex-fill overflow-hidden">
        <div class="ptabs flex-shrink-0">
          <button aria-label="Tool"><svg class="ic"><use href="#tool"/></svg></button><hr>
          <button aria-label="Render"><svg class="ic"><use href="#rtab"/></svg></button>
          <button class="cur" aria-label="Output"><svg class="ic"><use href="#otab"/></svg></button>
          <button aria-label="View layer"><svg class="ic"><use href="#layer"/></svg></button>
          <button aria-label="Scene"><svg class="ic"><use href="#scene"/></svg></button>
          <button style="color:#b7515f" aria-label="World"><svg class="ic"><use href="#world"/></svg></button><hr>
          <button aria-label="Collection"><svg class="ic"><use href="#coll-o"/></svg></button><hr>
          <button style="color:#c77e4a" aria-label="Object"><svg class="ic"><use href="#objt"/></svg></button>
          <button style="color:#6283c4" aria-label="Physics"><svg class="ic"><use href="#phys"/></svg></button>
          <button style="color:#6283c4" aria-label="Constraints"><svg class="ic"><use href="#cons"/></svg></button>
          <button style="color:#1fa883" aria-label="Data"><svg class="ic"><use href="#axis"/></svg></button><hr>
          <button style="color:#b7515f" aria-label="Texture"><svg class="ic"><use href="#chk"/></svg></button>
        </div>
        <div class="flex-fill d-flex flex-column overflow-hidden" style="padding:0 8px 0 8px;gap:2px">
          <div class="pnl flex-shrink-0 overflow-hidden" style="height:89px;padding:0 9px;border-radius:0 0 4px 4px">
            <div class="prow" style="margin-top:-10px"><label class="plabel" for="comp">Compression</label><input id="comp" class="flex-fill text-center rounded-1" style="height:18px;background:linear-gradient(90deg,var(--blue) 15%,var(--wgt) 15%)" value="15%"></div>
            <div class="prow" style="margin-top:7px"><span class="plabel">Image Sequence</span><label class="chk"><input type="checkbox" class="ck" checked>Overwrite</label></div>
            <div class="prow" style="margin-top:4px"><span class="plabel"></span><label class="chk"><input type="checkbox" class="ck">Placeholders</label></div>
            <div class="prow" style="margin-top:14px;padding-left:14px;gap:5px"><svg class="ic-s"><use href="#rt"/></svg>Color Management</div>
          </div>
          <div class="pnl flex-shrink-0"><div class="ph" style="height:25px;gap:6px;padding-right:5px"><svg class="ic-s"><use href="#rt"/></svg>Metadata<svg class="grip ms-auto"><use href="#grip"/></svg></div></div>
          <div class="pnl flex-shrink-0"><div class="ph" style="height:25px;gap:6px;padding-right:5px"><svg class="ic-s"><use href="#rt"/></svg>Post Processing<svg class="grip ms-auto"><use href="#grip"/></svg></div></div>
          <div class="pnl flex-shrink-0" style="padding-bottom:9px"><div class="ph" style="padding-right:5px"><svg class="ic-s"><use href="#open"/></svg><svg class="ic"><use href="#scs"/></svg>SCS Export<svg class="grip ms-auto"><use href="#grip"/></svg></div>
            <div style="padding:8px 9px 0">
              <div class="stack"><div class="d-flex" style="gap:1px"><div class="cell d-flex align-items-center justify-content-center" style="width:18px;height:22px"><input type="checkbox" class="ck line" aria-label="Lock scope"></div><button class="on" style="flex:1;height:22px">Selection</button><button style="flex:1;height:22px">Active Scene</button><button style="flex:1;height:22px">All Scenes</button></div><button style="height:39px">EXPORT</button></div>
              <div class="prow" style="margin-top:7px"><label class="plabel" for="dep">Default Export Path</label><span class="field flex-fill d-flex align-items-center" style="padding:0 2px"><svg class="ic me-2"><use href="#upl"/></svg><input id="dep" class="flex-fill" value="//prefab/dgx"></span><button class="fbtn" aria-label="Browse"><svg class="ic"><use href="#folder"/></svg></button></div>
              <div class="prow" style="margin-top:7px"><label class="plabel" for="scl">Export Scale</label><input id="scl" class="flex-fill text-center rounded-1" style="height:18px;background:var(--wgt)" value="1.00"></div>
              <div class="prow" style="margin-top:7px;padding-left:123px"><label class="chk" style="width:305px"><input type="checkbox" class="ck" checked>Apply Modifiers</label><label class="chk" style="opacity:.45"><input type="checkbox" class="ck" checked disabled>Apply 'Edge Split'</label></div>
              <div class="prow" style="margin-top:7px"><label class="plabel" for="ofm">Output Format</label><span class="sel flex-fill rounded-1" style="background:var(--menu);height:18px"><select id="ofm" style="padding-left:7px"><option>Game Data Format, ver. 5</option></select><svg class="ic-s" style="margin-right:2px"><use href="#dn"/></svg></span></div>
            </div></div>
          <div class="pnl flex-fill"><div class="ph" style="padding-right:5px"><svg class="ic-s"><use href="#open"/></svg><svg class="ic"><use href="#scs"/></svg>SCS Conversion Helper<button class="rounded-1 lit ms-auto me-1" style="width:18px;height:18px" aria-label="Pick"><svg class="ic"><use href="#drop"/></svg></button><svg class="grip"><use href="#grip"/></svg></div>
            <div style="padding:8px 9px 0">
              <div class="prow" style="gap:9px"><svg class="ic"><use href="#folder"/></svg><label for="ctp">Conversion Tools Path:</label></div>
              <div class="d-flex" style="margin-top:2px"><input id="ctp" class="field flex-fill" value="D:\Documents\conversion tools\"><button class="fbtn" aria-label="Browse"><svg class="ic"><use href="#folder"/></svg></button></div>
              <div class="stack" style="margin-top:7px"><div class="d-flex"><label class="tog"><input type="checkbox" class="ck line"><span>Custom Paths: OFF</span></label></div><button style="height:21px">CONVERT CURRENT SCS PROJECT</button></div>
              <div class="prow" style="gap:9px;margin-top:7px"><svg class="ic"><use href="#pack"/></svg><label for="mpk">Mod Package Settings:</label></div>
              <div class="stack" style="margin-top:2px"><div class="d-flex"><input id="mpk" class="field flex-fill" value="D:\Documents\American Truck Simulator\mod\"><button class="fbtn" style="height:18px" aria-label="Browse"><svg class="ic"><use href="#folder"/></svg></button><button class="fbtn" style="height:18px" aria-label="Inspect"><svg class="ic"><use href="#mag"/></svg></button></div>
                <input class="field" style="height:19px" value="Project Central America Objects" aria-label="Package name">
                <span class="sel" style="background:var(--menu)"><select style="padding-left:7px" aria-label="Compression type"><option>ZIP (Uncompressed)</option></select><svg class="ic-s" style="margin-right:2px"><use href="#dn"/></svg></span></div>
              <div class="stack" style="margin-top:8px"><div class="d-flex" style="gap:1px"><label class="tog"><input type="checkbox" class="ck line"><span>Clean</span></label><label class="tog on"><input type="checkbox" class="ck line" checked><span>Export</span></label><label class="tog on"><input type="checkbox" class="ck line" checked><span>Convert</span></label></div><button style="height:29px;white-space:pre">&gt;&gt;&gt;&gt;    PACK MOD    &lt;&lt;&lt;&lt;</button></div>
            </div></div>
        </div>
      </div>
    </section>
  </div>
</main>

<div class="status d-flex align-items-center flex-shrink-0">
  <svg class="ic" style="margin-left:11px;width:12px"><use href="#mouse-l"/></svg>
  <svg class="ic" style="margin-left:199px;width:12px"><use href="#mouse-m"/></svg><span style="margin-left:11px;width:188px">Pan View</span>
  <svg class="ic" style="width:12px"><use href="#mouse-r"/></svg><span class="ms-auto" style="padding-right:11px;font-size:12px">3.6.23</span>
</div>

<footer class="taskbar win-ui d-flex align-items-center flex-shrink-0">
  <button style="width:48px" aria-label="Start"><svg width="16" height="16" fill="#fff"><path d="M0 2l7-1v6.500H0zM8 1l8-1v7.500H8zM0 8.500h7V15l-7-1zM8 8.500h8V16l-8-1z"/></svg></button>
  <label class="find d-flex align-items-center overflow-hidden"><svg class="ic" style="margin-left:11px"><use href="#find"/></svg><input class="flex-fill" style="margin-left:12px;width:150px" placeholder="Type here to search" aria-label="Search">
    <svg width="76" height="38" viewBox="0 0 76 38"><path d="M2 14C12 0 60-2 74 8v20H4z" fill="#bfe3f2"/><path d="M10 12h20l30 2 12 14H14z" fill="#6da3cf"/><path d="M2 20c6-6 14-4 18 4l-6 10H4z" fill="#4d8a3c"/><path d="M40 12l4-10 3 1 3-2 4 2 4-1 3 11-6 6z" fill="#9a6c3e"/><path d="M46 4v10M52 4v12M57 5v10" stroke="#6e4826"/><path d="M0 38c6-16 26-16 38-14 6-8 22-10 34-6l4 20z" fill="#5f9e45"/><path d="M46 22l8-3 4 12-10 4zM64 18l8 2v14l-8-4z" fill="#8c7763"/><path d="M14 26l10-4 8 6-8 8H14z" fill="#7d6b58"/><path d="M14 38c10-8 24-10 36-4l2 4z" fill="#7fbb4f"/></svg></label>
  <button style="width:51px" aria-label="Task view"><svg width="18" height="18" fill="none" stroke="#fff"><path d="M.5 1v2.500h11V1M.5 17v-2.500h11V17M.5 6h11v6H.5zM15.500 1v16M14 5h3v3h-3z"/></svg></button>
  <button class="app"><svg viewBox="0 0 24 24"><circle cx="12" cy="12" r="11" fill="#fbc116"/><path d="M12 1a11 11 0 0 1 9.600 5.500H12a5.500 5.500 0 0 0-5.200 4L2.400 6.500A11 11 0 0 1 12 1z" fill="#e33b2e"/><path d="M2.400 6.500 7.300 15c1.500 2.500 4 3 6.500 2.200L11 23A11 11 0 0 1 2.400 6.500z" fill="#2da94f"/><circle cx="12" cy="12" r="5.500" fill="#fff"/><circle cx="12" cy="12" r="4.200" fill="#2a7be8"/></svg>Blender Error Whic...</button>
  <button class="app"><svg viewBox="0 0 24 24"><circle cx="12" cy="12" r="11" fill="#124b87"/><path d="M1 11 9 14.500l5-4" stroke="#fff" stroke-width="3" fill="none"/><circle cx="15.500" cy="9" r="4" fill="#124b87" stroke="#fff" stroke-width="1.700"/><circle cx="15.500" cy="9" r="1.800" fill="#fff"/><circle cx="9" cy="16" r="3" fill="#fff"/></svg>Steam</button>
  <button style="width:50px" aria-label="OBS"><svg width="24" height="24"><circle cx="12" cy="12" r="11" fill="#26242a" stroke="#d0d0d0"/><g fill="none" stroke="#c8c8c8" stroke-width="1.800"><path d="M12 12c-4-1-5-5-2-8"/><path d="M12 12c-4-1-5-5-2-8" transform="rotate(120 12 12)"/><path d="M12 12c-4-1-5-5-2-8" transform="rotate(240 12 12)"/></g></svg></button>
  <button style="width:50px" aria-label="Explorer"><svg width="24" height="24"><path d="M1 3h8l2 2h12v16H1z" fill="#f0b93a"/><path d="M1 7h22v14H1z" fill="#ffd766"/><path d="M5 21v-7h14v7h-4v-4H9v4z" fill="#3a93d4"/></svg></button>
  <button class="app"><svg><use href="#logo"/></svg>Blender</button>
  <button class="app active"><svg><use href="#logo"/></svg>Blender File View</button>
  <button class="app"><svg viewBox="0 0 24 24"><path d="M3 2h7l1 5h9l2 2v9l-4 4H6l-2-4z" fill="#b9b9b9"/><path d="M3 2h5v16H5z" fill="#c8202b"/><path d="M10 8h9v9h-9z" fill="#555"/><path d="M11 8v9M13 8v9M15 8v9M17 8v9" stroke="#ddd"/><path d="M4 17h16v2H4z" fill="#eee"/><circle cx="7" cy="20" r="2" fill="#222"/></svg>Map editor - /map/...</button>
  <div class="ms-auto d-flex align-items-center" style="font-size:13px">
    <svg width="26" height="26" viewBox="0 0 26 26"><path d="M6 24a6 6 0 0 1-1-11 8 8 0 0 1 14-2 6 6 0 0 1 1 13z" fill="#a9c8f5"/><path d="M6 24a6 6 0 0 1-3-9c8 4 14 1 21 3a6 6 0 0 1-4 6z" fill="#7ea5e8"/><circle cx="18" cy="7" r="6" fill="#c42b1c"/><path d="M16.500 5.500 18.500 4v6" fill="none" stroke="#fff" stroke-width="1.200"/></svg>
    <span style="margin:0 9px 0 8px">14°C</span><span>Mostly cloudy</span>
    <svg width="12" height="12" viewBox="0 0 8 8" style="margin:0 12px 0 26px"><use href="#up"/></svg>
    <svg class="ic me-2" viewBox="0 0 16 16"><path d="M3 5h7v7H3zM10 7l4-2v7l-4-2M4 2c3-2 5-2 8 0M4 15c3 1 5 1 8 0" fill="none" stroke="#fff"/></svg>
    <svg class="ic me-2" viewBox="0 0 16 16"><path d="M1 6h2l4-4v12l-4-4H1zM9.500 6q1.500 2 0 4M12 4q3 4 0 8M14 2q4 6 0 12" fill="none" stroke="#fff"/></svg>
    <svg class="ic" viewBox="0 0 16 16"><path d="M5 4.500h10.500v7H4M7 14.500h7M10 12v2M1 2.500h4v4H1zM3 7v7" fill="none" stroke="#fff"/></svg>
    <span style="margin:0 12px 0 10px;font-size:11px">ENG</span>
    <span class="text-center" style="font-size:11px;line-height:18px">14:31<br>07/06/2026</span>
    <svg width="18" height="18" style="margin:0 20px 0 18px"><path d="M1 1.500h15v11h-5L8.500 16 6 12.500H1z" fill="none" stroke="#fff" stroke-width="1.200"/></svg>
    <span style="width:1px;height:40px;background:#73819a;margin-right:3px"></span>
  </div>
</footer>

<section class="fileview position-absolute d-flex flex-column" role="dialog" aria-label="Blender File View">
  <div class="fv-title win-ui d-flex align-items-center flex-shrink-0"><svg class="ic ms-2 me-1"><use href="#logo"/></svg><span>Blender File View</span>
    <button class="winbtn ms-auto" aria-label="Minimize"><svg width="10" height="10" fill="#fff"><use href="#min"/></svg></button><button class="winbtn" aria-label="Maximize"><svg width="10" height="10"><use href="#max"/></svg></button><button class="winbtn" aria-label="Close"><svg width="10" height="10"><use href="#x"/></svg></button></div>
  <div class="d-flex flex-fill overflow-hidden shade">
    <aside class="fv-side d-flex flex-column flex-shrink-0">
      <div class="pnl flex-shrink-0" style="height:101px"><div class="ph"><svg class="ic-s"><use href="#open"/></svg><span class="ms-1">Volumes</span><svg class="grip ms-auto" style="margin-right:-6px"><use href="#grip"/></svg></div>
        <div class="lst" style="margin:8px 9px 0;height:58px"><a href="#"><svg class="ic"><use href="#disk"/></svg>Local Disk (C:)</a><a href="#"><svg class="ic"><use href="#disk"/></svg>Local Disk (D:)</a><div class="foot"><svg class="ic-s"><use href="#tri-r"/></svg><svg class="grip" style="margin:0 auto"><use href="#grip"/></svg></div></div></div>
      <div class="pnl flex-shrink-0" style="height:241px"><div class="ph"><svg class="ic-s"><use href="#open"/></svg><span class="ms-1">System</span><svg class="grip ms-auto" style="margin-right:-6px"><use href="#grip"/></svg></div>
        <div class="lst" style="margin:8px 9px 0;height:198px"><a href="#"><svg class="ic"><use href="#home"/></svg>Home</a><a href="#"><svg class="ic"><use href="#desk"/></svg>Desktop</a><a href="#"><svg class="ic"><use href="#docs"/></svg>Documents</a><a href="#"><svg class="ic"><use href="#dnl"/></svg>Downloads</a><a href="#"><svg class="ic"><use href="#music"/></svg>Music</a><a href="#"><svg class="ic"><use href="#pict"/></svg>Pictures</a><a href="#"><svg class="ic"><use href="#video"/></svg>Videos</a><a href="#"><svg class="ic"><use href="#fontf"/></svg>Fonts</a><a href="#"><svg class="ic"><use href="#globe"/></svg>OneDrive</a><div class="foot"><svg class="ic-s"><use href="#tri-r"/></svg><svg class="grip" style="margin:0 auto"><use href="#grip"/></svg></div></div></div>
      <div class="pnl flex-shrink-0" style="height:101px"><div class="ph"><svg class="ic-s"><use href="#open"/></svg><span class="ms-1">Bookmarks</span><svg class="grip ms-auto" style="margin-right:-6px"><use href="#grip"/></svg></div>
        <div class="d-flex" style="margin:8px 9px 0;gap:10px"><div class="lst flex-fill" style="height:58px"><a href="#"><svg class="ic"><use href="#folder"/></svg>Project Central America</a><div class="foot" style="margin-top:19px"><svg class="ic-s"><use href="#tri-r"/></svg><svg class="grip" style="margin:0 auto"><use href="#grip"/></svg></div></div>
          <div class="stack" style="width:18px"><button style="height:18px" aria-label="Add"><svg width="10" height="10"><use href="#plus"/></svg></button><button aria-label="Remove"><svg width="10" height="10" fill="#ddd"><use href="#min"/></svg></button><button style="background:#282828;height:19px" aria-label="More"><svg class="ic-s"><use href="#dn"/></svg></button></div></div></div>
      <div class="pnl flex-fill mb-0 overflow-hidden"><div class="ph"><svg class="ic-s"><use href="#open"/></svg><span class="ms-1">Recent</span><svg class="grip ms-auto" style="margin-right:-6px"><use href="#grip"/></svg></div>
        <div class="d-flex align-items-start" style="margin:8px 9px 0;gap:10px"><div class="lst flex-fill d-flex" style="height:140px;padding-right:5px"><div class="flex-fill"><a href="#"><svg class="ic"><use href="#folder"/></svg>mod</a><a href="#"><svg class="ic"><use href="#folder"/></svg>dgx</a><a href="#"><svg class="ic"><use href="#folder"/></svg>modmap</a><a href="#"><svg class="ic"><use href="#folder"/></svg>Project Central America</a><a href="#"><svg class="ic"><use href="#folder"/></svg>dgx</a><a href="#"><svg class="ic"><use href="#folder"/></svg>ATS 1.58 Extract</a></div><div style="width:10px;background:#545454;border-radius:5px"></div></div>
          <button class="lit rounded-1" style="width:18px;height:18px" aria-label="Clear"><svg width="10" height="10"><use href="#x"/></svg></button></div></div>
    </aside>
    <div style="width:3px;margin:9px 2px 102px;background:#454545;border-radius:2px" class="flex-shrink-0"></div>
    <div class="d-flex flex-column flex-fill overflow-hidden">
      <div class="d-flex align-items-center flex-shrink-0" style="height:42px;padding:0 9px;gap:9px">
        <div class="wg big lit"><button style="width:26px" aria-label="Back"><svg class="ic"><use href="#a-l"/></svg></button><button style="width:26px" aria-label="Forward"><svg class="ic"><use href="#a-r"/></svg></button><button style="width:26px" aria-label="Parent"><svg class="ic"><use href="#a-u"/></svg></button><button style="width:26px" aria-label="Refresh"><svg class="ic"><use href="#refr"/></svg></button></div>
        <div class="wg big lit"><button aria-label="New folder"><svg class="ic"><use href="#newf"/></svg></button></div>
        <div class="wg big flex-fill" style="background:#1d1d1d"><input class="w-100" style="padding-left:7px" value="D:\Documents\conversion tools\" aria-label="Path"></div>
        <label class="wg big" style="background:#1d1d1d;width:124px"><svg class="ic" style="margin-left:3px"><use href="#find"/></svg><input class="w-100" aria-label="Search files"></label>
        <div class="wg big"><button class="on" aria-label="Vertical list"><svg class="ic"><use href="#v1"/></svg></button><button class="lit" aria-label="Horizontal list"><svg class="ic"><use href="#v2"/></svg></button><button class="lit" aria-label="Thumbnails"><svg class="ic"><use href="#v3"/></svg></button><button aria-label="Display options"><svg class="ic-s"><use href="#dn"/></svg></button></div>
        <div class="wg big"><button class="lit" aria-label="Filter"><svg class="ic"><use href="#funnel"/></svg></button><button aria-label="Filter options"><svg class="ic-s"><use href="#dn"/></svg></button></div>
        <div class="wg big lit"><button aria-label="Settings"><svg class="ic"><use href="#gear"/></svg></button></div>
      </div>
      <div class="fv-list flex-fill position-relative overflow-hidden">
        <table class="w-100"><thead><tr><th style="padding:0 9px 0 11px"><span class="d-flex align-items-center justify-content-between" style="border-right:1px solid #222;margin-right:-9px;padding-right:5px">Name<svg class="ic-s" style="color:#aaa"><use href="#tri-d"/></svg></span></th><th style="width:125px"><span class="d-block" style="border-right:1px solid #222;padding-left:11px">Date Modified</span></th><th style="width:90px;padding-left:11px">Size</th></tr></thead><tbody id="files"></tbody></table>
        <div class="position-absolute" style="right:3px;top:31px;bottom:9px;width:3px;background:#454545;border-radius:2px"></div>
        <svg class="ic-s position-absolute" style="right:1px;top:17px;color:#999"><use href="#lf"/></svg>
      </div>
      <div class="d-flex flex-shrink-0" style="height:42px;padding:9px 9px 0;gap:10px">
        <input class="flex-fill rounded-1" style="height:25px;background:#282828;border:1px solid #363636" aria-label="File name">
        <button class="on rounded-1" style="width:126px;height:25px">Accept</button><button class="lit rounded-1" style="width:126px;height:25px">Cancel</button>
      </div>
      <svg class="ic-s position-absolute" style="right:18px;bottom:-1px;color:#999"><use href="#up"/></svg>
    </div>
  </div>
</section>

<script>
const files = [
  ["folder","base","02 May 2026 12:00",""],["folder","bin","02 May 2026 12:00",""],["folder","licenses","02 May 2026 12:02",""],
  ["flink","linked_bt_70c18be0a6b94d74a2e637a2382e8dbc0f81c291","Today 14:09",""],["folder","rsrc","Today 14:21",""],
  ["file","convert.cmd","26 Jan 2026 15:58","177 B"],["ftxt","extra_mount.txt","Today 14:21","50 B"],
  ...["5fe3d489069176ebf11a02138e6ead177bb80bd4","366fbb289e7b4c98ec0327c52e33a3c169000874","914404533201a4e6820626d86b940a439bcd2278","b09ed208a0ced571490f0f7c06d84f18bba92e32","b102cd1074cad506fcd5b69e3a5f67bc0b4650ca","c5099c70c79f777ecd087943a87ec5a4be639f80","ce4b6d7076356908a131404bbf51d2fe9f36b1f1","dcf62f2438bc73cfae5ac0737c42518f199b09ea"].map(h => ["file","linked_bt_"+h,"01 Jan 1970 00:00","0 B"]),
  ["file","mass_convert.log","Today 14:21","11.5 MiB"]
];
document.getElementById("files").innerHTML = files.map(([icon,name,date,size]) =>
  `<tr><td><span class="d-flex align-items-center gap-1" style="padding-left:12px"><svg class="ic" style="color:${icon==="folder"?"#b0945a":"#c9c9c9"}"><use href="#${icon}"/></svg><span class="${name.startsWith("linked")?"hash":""}">${name}</span></span></td><td class="when" style="padding-left:11px">${date}</td><td class="text-end" style="padding-right:26px">${size}</td></tr>`).join("");
for (let f = 10; f <= 250; f += 10) {
  document.getElementById("ruler").insertAdjacentHTML("beforeend", `<div class="tick">${f}</div>`);
  document.getElementById("tgrid").insertAdjacentHTML("beforeend", `<div class="tick"></div>`);
}
</script>
</body>
</html>
